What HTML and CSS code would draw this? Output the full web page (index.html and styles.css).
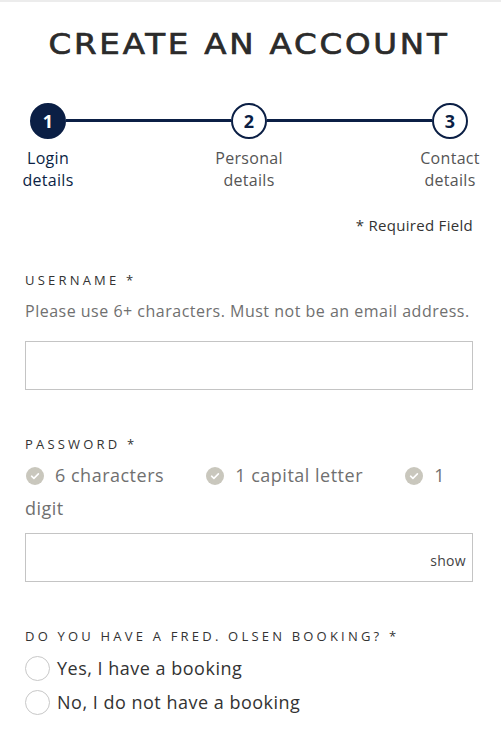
FILE: index.html
```html
<!DOCTYPE html>
<html lang="en">
<head>
<meta charset="utf-8">
<title>Create an account</title>
<link rel="stylesheet" href="styles.css">
</head>
<body>
<main class="page">
  <h1 class="title"><span class="title-text">CREATE AN ACCOUNT</span></h1>

  <div class="stepper">
    <div class="step step-active">
      <span class="step-num">1</span>
      <span class="step-label">Login<br>details</span>
    </div>
    <div class="connector"></div>
    <div class="step">
      <span class="step-num">2</span>
      <span class="step-label">Personal<br>details</span>
    </div>
    <div class="connector"></div>
    <div class="step">
      <span class="step-num">3</span>
      <span class="step-label">Contact<br>details</span>
    </div>
  </div>

  <p class="required">* Required Field</p>

  <section class="field field-username">
    <label class="field-label" for="username">USERNAME *</label>
    <p class="hint">Please use 6+ characters. Must not be an email address.</p>
    <div class="input-box"><input id="username" class="input" type="text"></div>
  </section>

  <section class="field field-password">
    <label class="field-label" for="password">PASSWORD *</label>
    <p class="rules"><span class="rule"><span class="check"><svg viewBox="0 0 18 18" width="18" height="18"><circle cx="9" cy="9" r="9" fill="#c9c7bd"/><path d="M5.6 9.2 L7.9 11.4 L12.4 6.9" fill="none" stroke="#fff" stroke-width="1.6" stroke-linecap="round" stroke-linejoin="round"/></svg></span>6 characters</span> <span class="rule"><span class="check"><svg viewBox="0 0 18 18" width="18" height="18"><circle cx="9" cy="9" r="9" fill="#c9c7bd"/><path d="M5.6 9.2 L7.9 11.4 L12.4 6.9" fill="none" stroke="#fff" stroke-width="1.6" stroke-linecap="round" stroke-linejoin="round"/></svg></span>1 capital letter</span> <span class="rule"><span class="check"><svg viewBox="0 0 18 18" width="18" height="18"><circle cx="9" cy="9" r="9" fill="#c9c7bd"/><path d="M5.6 9.2 L7.9 11.4 L12.4 6.9" fill="none" stroke="#fff" stroke-width="1.6" stroke-linecap="round" stroke-linejoin="round"/></svg></span>1</span> digit</p>
    <div class="input-box">
      <input id="password" class="input" type="password">
      <span class="show">show</span>
    </div>
  </section>

  <section class="field field-booking">
    <p class="field-label">DO YOU HAVE A FRED. OLSEN BOOKING? *</p>
    <label class="radio"><span class="radio-circle"></span>Yes, I have a booking</label>
    <label class="radio"><span class="radio-circle"></span>No, I do not have a booking</label>
  </section>
</main>
</body>
</html>
```

FILE: styles.css
```css
* { box-sizing: border-box; }
html, body { margin: 0; padding: 0; background: #fff; }
body {
  border-top: 2px solid #ececec;
  font-family: "Open Sans", "Lato", sans-serif;
  color: #333;
}
.page {
  width: 448px;
  margin-left: 25px;
}
.title {
  margin: 26px 0 0;
  text-align: center;
  font-family: "DejaVu Sans", sans-serif;
  font-weight: 400;
  font-size: 29px;
  line-height: 32px;
  color: #2b2b2b;
}
.title-text {
  display: inline-block;
  letter-spacing: 2.5px;
  transform: scaleX(1.12);
  -webkit-text-stroke: 0.7px #2b2b2b;
}
.stepper {
  display: flex;
  align-items: flex-start;
  padding: 0 5px;
  margin-top: 43px;
}
.step {
  width: 36px;
  display: flex;
  flex-direction: column;
  align-items: center;
  flex: none;
}
.step-num {
  width: 36px;
  height: 36px;
  border-radius: 50%;
  border: 2px solid #0b1f45;
  background: #fff;
  color: #0b1f45;
  display: flex;
  align-items: center;
  justify-content: center;
  font-family: "Open Sans", sans-serif;
  font-weight: 700;
  font-size: 18px;
}
.step-active .step-num { background: #0b1f45; color: #fff; }
.step-label {
  margin-top: 8px;
  white-space: nowrap;
  text-align: center;
  font-size: 16px;
  line-height: 22px;
  color: #555;
  font-weight: 400;
  letter-spacing: 0.3px;
}
.step-active .step-label { color: #0b1f45; font-weight: 500; }
.connector {
  flex: 1;
  height: 3px;
  background: #0b1f45;
  margin-top: 16px;
}
.required {
  margin: 23px 0 0;
  text-align: right;
  font-size: 15px;
  line-height: 22px;
  color: #333;
  font-weight: 400;
  letter-spacing: 0.3px;
}
.field-label {
  display: block;
  margin: 0;
  font-size: 13px;
  line-height: 18px;
  letter-spacing: 3.2px;
  color: #333;
  font-weight: 500;
}
.field-username { margin-top: 35px; }
.hint {
  margin: 11px 0 0;
  font-size: 16px;
  line-height: 22px;
  color: #707070;
  font-weight: 400;
  letter-spacing: 0.5px;
}
.input-box {
  position: relative;
  margin-top: 19px;
  height: 49px;
  border: 1px solid #c4c4c4;
  display: flex;
  align-items: center;
}
.input {
  flex: 1;
  height: 100%;
  border: 0;
  outline: none;
  background: transparent;
  font: inherit;
  padding: 0 12px;
}
.show {
  font-size: 14px;
  color: #444;
  padding-right: 6px;
  padding-top: 5px;
  letter-spacing: 0.3px;
}
.field-password { margin-top: 45px; }
.rules {
  margin: 6px 0 0;
  font-size: 18px;
  line-height: 33px;
  color: #707070;
  font-weight: 400;
  letter-spacing: 0.5px;
}
.rule { margin-right: 36px; }
.rule:last-of-type { margin-right: 0; }
.check {
  display: inline-block;
  width: 18px;
  height: 18px;
  margin: 0 11px 0 1px;
  vertical-align: -3px;
}
.check svg { display: block; }
.field-password .input-box { margin-top: 8px; }
.field-booking { margin-top: 45px; }
.radio {
  display: flex;
  align-items: center;
  font-size: 18px;
  line-height: 34px;
  color: #333;
  font-weight: 400;
  letter-spacing: 0.5px;
}
.radio:first-of-type { margin-top: 6px; }
.radio-circle {
  width: 25px;
  height: 25px;
  border-radius: 50%;
  border: 1px solid #c8c8c8;
  margin-right: 7px;
  flex: none;
}
```
